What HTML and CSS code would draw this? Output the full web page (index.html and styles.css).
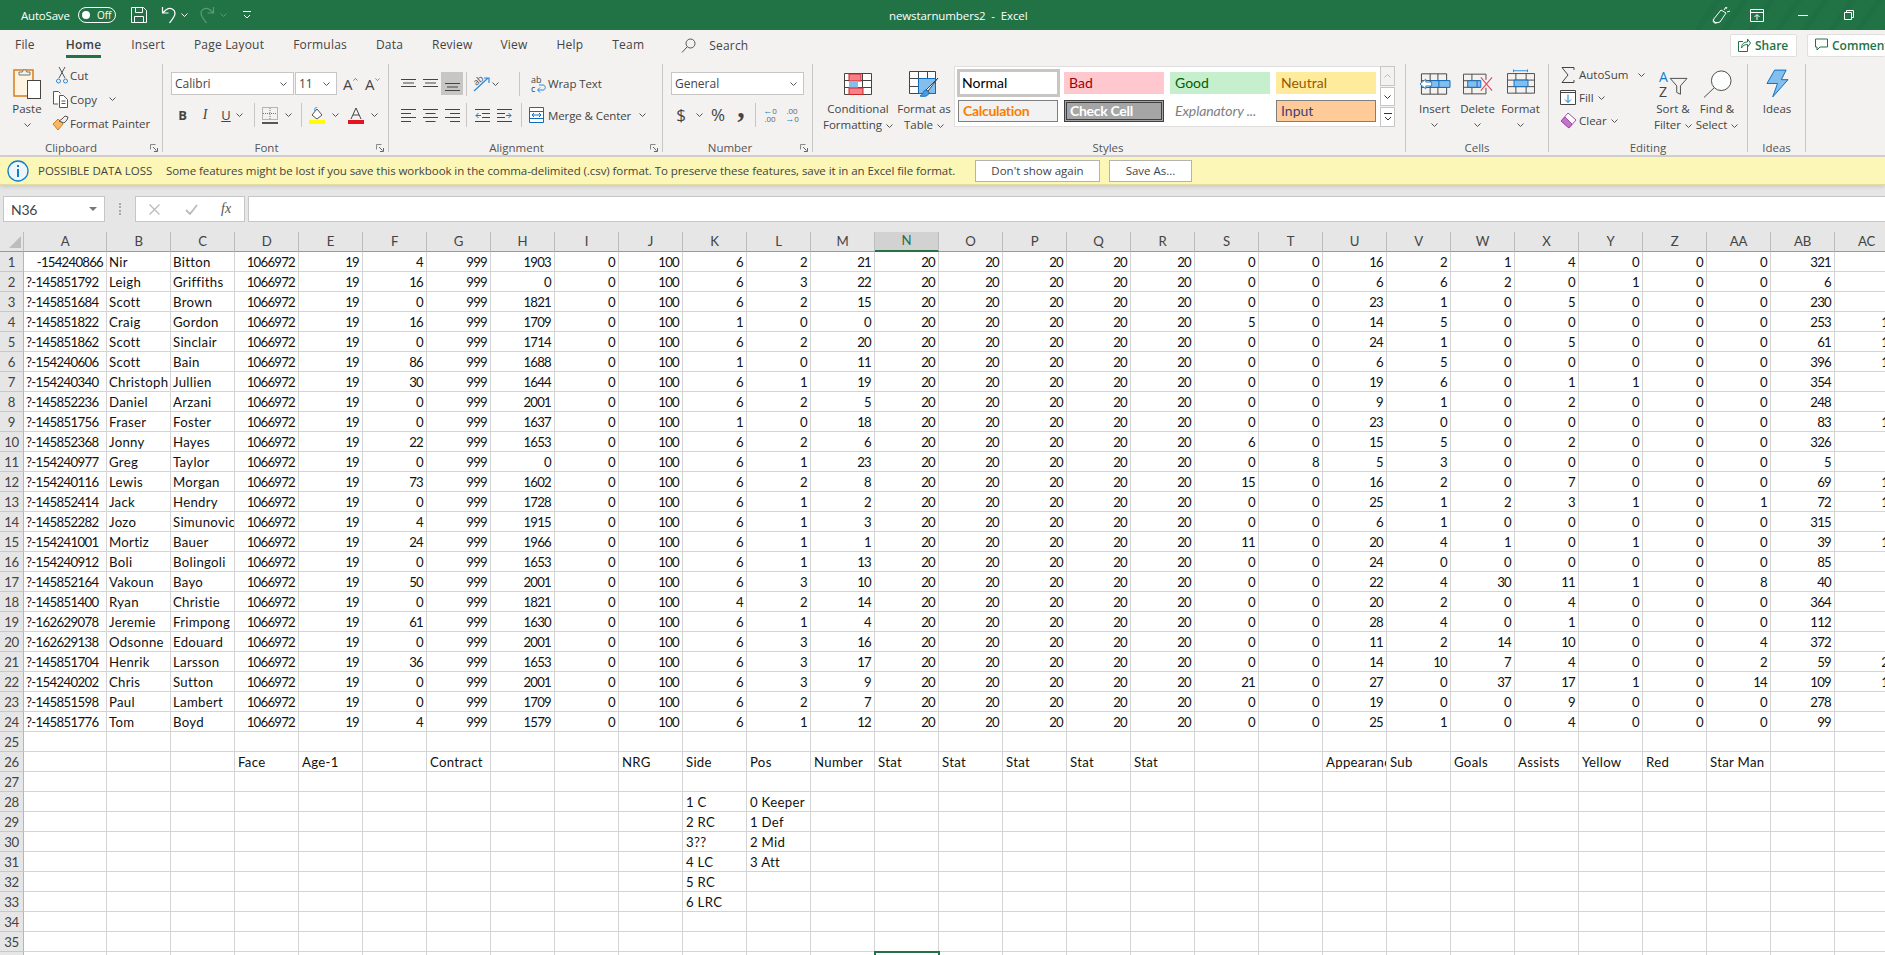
FILE: index.html
```html
<!DOCTYPE html>
<html lang="en">
<head>
<meta charset="utf-8">
<title>newstarnumbers2 - Excel</title>
<link rel="stylesheet" href="styles.css">
</head>
<body>
<svg class="defs" aria-hidden="true">
<symbol id="chev" viewBox="0 0 7 4"><path d="M.5.5l3 3 3-3" fill="none" stroke="currentColor"/></symbol>
<symbol id="save" viewBox="0 0 16 16"><path d="M.5.5h12l3 3v12H.5zM4.5.5v5h7v-5M3.5 15.5v-6h9v6" fill="none" stroke="currentColor"/></symbol>
<symbol id="undo" viewBox="0 0 15 18"><path d="M1.5 1v6h6M1.5 7l4-3.5c4-2.5 8.500 0 8.500 4 0 3.500-3 5.500-5.500 9.500" fill="none" stroke="currentColor" stroke-width="1.200"/></symbol>
<symbol id="redo" viewBox="0 0 15 18"><path d="M13.500 1v6h-6M13.500 7l-4-3.500c-4-2.500-8.500 0-8.500 4 0 3.500 3 5.500 5.500 9.500" fill="none" stroke="currentColor" stroke-width="1.200"/></symbol>
<symbol id="custom" viewBox="0 0 8 8"><path d="M0 .5h8M1 4l3 3 3-3" fill="none" stroke="currentColor"/></symbol>
<symbol id="feedback" viewBox="0 0 18 18"><path d="M1 14L9 4l5 3-6 9-4 1zM2 13.500a2 2 0 1 0 3 2.500M12 4l2-3M15 6l3-1M14 3l1-2" fill="none" stroke="currentColor"/></symbol>
<symbol id="display" viewBox="0 0 14 13"><path d="M.5.500h13v12H.5zM.5 3.500h13M7 11V6M4.500 8L7 5.500 9.500 8" fill="none" stroke="currentColor"/></symbol>
<symbol id="restore" viewBox="0 0 10 10"><path d="M.5 2.500h7v7h-7zM2.500 2.500v-2h7v7h-2" fill="none" stroke="currentColor"/></symbol>
<symbol id="search" viewBox="0 0 15 15"><circle cx="9.500" cy="5.500" r="4.500" fill="none" stroke="#555"/><path d="M6 9l-5 5.500" stroke="#555" fill="none"/></symbol>
<symbol id="share" viewBox="0 0 13 14"><path d="M5 3.500H.5v10h9V9M3.500 10c0-4 2.500-6 6-6V1l3 4-3 4V6.500c-3 0-4.500 1-6 3.500z" fill="none" stroke="#217346"/></symbol>
<symbol id="comment" viewBox="0 0 13 13"><path d="M.5.500h12v8H5l-3 3v-3H.5z" fill="none" stroke="#217346"/></symbol>
<symbol id="paste" viewBox="0 0 28 32"><path d="M1 6h19v26H1z" fill="#fff4e0" stroke="#d67f1c" stroke-width="1.500" transform="translate(0 -4)"/><path d="M6 4h3.500c0-3 4-3 4 0H17v3H6z" fill="#f3f2f1" stroke="#777"/><rect x="14.500" y="12.500" width="13" height="18" fill="#fff" stroke="#444"/></symbol>
<symbol id="cut" viewBox="0 0 12 17"><path d="M3 0l6 11M9 0L3 11" fill="none" stroke="#555"/><circle cx="2.500" cy="14" r="2" fill="none" stroke="#2b88d8"/><circle cx="9.500" cy="14" r="2" fill="none" stroke="#2b88d8"/></symbol>
<symbol id="copy" viewBox="0 0 15 17"><path d="M5 13H.5V.5h5l2 2M6.500 4.500h4l4 4v8h-8z" fill="#fff" stroke="#555"/><path d="M8.500 10h4M8.500 12.500h4" stroke="#555"/></symbol>
<symbol id="painter" viewBox="0 0 17 16"><path d="M1 9l5-5 5 5-5 6z" fill="#f5b76b" stroke="#d67f1c"/><path d="M7 6l3-2 3-3 3 1-1 3-3 3z" fill="#eee" stroke="#555"/></symbol>
<symbol id="launcher" viewBox="0 0 8 8"><path d="M.5 5.500v-5h5" fill="none" stroke="#888"/><path d="M3 3l3.500 3.500M7.500 4v3.500H4" fill="none" stroke="#666"/></symbol>
<symbol id="borders" viewBox="0 0 16 17"><path d="M.5.500h15v12H.5z" fill="none" stroke="#777" stroke-dasharray="1 1"/><path d="M8 1v12M1 6.500h14" stroke="#777" stroke-dasharray="1 1"/><path d="M0 16h16" stroke="#222" stroke-width="1.500"/></symbol>
<symbol id="fill" viewBox="0 0 16 17"><path d="M3 8l5-6 5 6-5 4z" fill="#fff" stroke="#555"/><path d="M8 1C8 0 5 0 6 4" fill="none" stroke="#2b88d8"/><rect y="13" width="16" height="4" fill="#ff0"/></symbol>
<symbol id="color" viewBox="0 0 16 17"><path d="M3 12L8 1l5 11M5 8h6" fill="none" stroke="#444"/><rect y="13" width="16" height="4" fill="#e81123"/></symbol>
<symbol id="a-top" viewBox="0 0 15 9"><path d="M0 .5h15M2 4h11M0 7.500h15" stroke="#444" fill="none"/></symbol>
<symbol id="a-left" viewBox="0 0 15 15"><path d="M0 1.500h15M0 5.500h10M0 9.500h15M0 13.500h10" stroke="#444"/></symbol>
<symbol id="a-center" viewBox="0 0 15 15"><path d="M0 1.500h15M2.500 5.500h10M0 9.500h15M2.500 13.500h10" stroke="#444"/></symbol>
<symbol id="a-right" viewBox="0 0 15 15"><path d="M0 1.500h15M5 5.500h10M0 9.500h15M5 13.500h10" stroke="#444"/></symbol>
<symbol id="indent-l" viewBox="0 0 15 15"><path d="M0 1.500h15M7 5.500h8M7 9.500h8M0 13.500h15" stroke="#444"/><path d="M6 7.500H1M3.500 5L1 7.500 3.500 10" fill="none" stroke="#0f7fc9"/></symbol>
<symbol id="indent-r" viewBox="0 0 15 15"><path d="M0 1.500h15M0 5.500h8M0 9.500h8M0 13.500h15" stroke="#444"/><path d="M9 7.500h5M11.500 5L14 7.500 11.500 10" fill="none" stroke="#0f7fc9"/></symbol>
<symbol id="orient" viewBox="0 0 18 17"><path d="M1 16L15 3M11 3h5v5" fill="none" stroke="#2b88d8" stroke-width="1.200"/><text x="1" y="9" font-size="9" font-family="Open Sans" fill="#555" transform="rotate(-40 5 7)">ab</text></symbol>
<symbol id="wrap" viewBox="0 0 16 18"><text x="1" y="8" font-size="9" font-family="Open Sans" fill="#444">ab</text><text x="1" y="17" font-size="9" font-family="Open Sans" fill="#444">c</text><path d="M8 15h5c3 0 3-5 0-5H9M10 12.500L7.500 15l2.500 2.500" fill="none" stroke="#2b88d8"/></symbol>
<symbol id="merge" viewBox="0 0 15 16"><path d="M.5.500h14v15H.5zM.5 4.500h14M.5 11.500h14" fill="#fff" stroke="#0f6cbd"/><path d="M3 8h9M5 6L3 8l2 2M10 6l2 2-2 2" fill="none" stroke="#0f6cbd"/></symbol>
<symbol id="cf" viewBox="0 0 28 22"><path d="M.5.500h27v21H.5zM9.500.5v21M18.500.5v21M.5 7.500h27M.5 14.500h27" fill="#fff" stroke="#444"/><rect x="5" y="1" width="12" height="7" fill="#f6808a" stroke="#c62828"/><rect x="5" y="8" width="9" height="7" fill="#83beec"/><rect x="5" y="15" width="14" height="6.500" fill="#f6808a" stroke="#c62828"/></symbol>
<symbol id="fat" viewBox="0 0 30 26"><path d="M.5.500h26v22H.5zM9.500.5v22M18.500.5v22M.5 7.500h26M.5 15.500h26" fill="#fff" stroke="#444"/><rect x="10" y="8" width="16" height="14" fill="#83beec"/><path d="M9.500 7.500h17v15h-17z" fill="none" stroke="#0f6cbd"/><path d="M29 7L19 20l-2-1z" fill="#fff" stroke="#444"/><path d="M17 19c-3 0-2 4-6 6 5 1 9 0 9-4z" fill="#4a9ee0" stroke="#0f6cbd"/></symbol>
<symbol id="insert" viewBox="0 0 33 22"><path d="M2.500.5h26v21h-26zM11.500.5v21M19.500.5v21M2.500 7.500h26M2.500 14.500h26" fill="none" stroke="#444"/><path d="M12 7.500h20v7H12z" fill="#83beec" stroke="#0f6cbd"/><path d="M20.500 7.500v7" stroke="#0f6cbd"/><path d="M1 11l6-5v3h6v4H7v3z" fill="#fff" stroke="#2b88d8"/></symbol>
<symbol id="delete" viewBox="0 0 32 22"><path d="M.5.500h24M.5 21.500h24M.5.500v21M9.500.5v21M24.500.5v6M24.500 15v6.500M.5 7.500h18M.5 14.500h18" fill="none" stroke="#444"/><path d="M5 7.500h14v7H5z" fill="#83beec" stroke="#0f6cbd"/><path d="M15 7.500v7" stroke="#0f6cbd"/><path d="M19 4l12 14M31 4L19 18" stroke="#e8475b" stroke-width="1.200"/></symbol>
<symbol id="format" viewBox="0 0 30 26"><path d="M7 1.500h15M7 0v3M22 0v3" stroke="#2b88d8" fill="none"/><path d="M.5 4.500h29v21H.5zM9.500 4.500v21M20.500 4.500v21M.5 11.500h29M.5 18.500h29" fill="none" stroke="#444"/><path d="M7.500 11.500h15v7h-15z" fill="#83beec" stroke="#0f6cbd"/></symbol>
<symbol id="sigma" viewBox="0 0 14 16"><path d="M13 3V.5H1l6 7.500-6 7.500h12V13" fill="none" stroke="#444"/></symbol>
<symbol id="filldown" viewBox="0 0 16 15"><path d="M.5.500h15v14H.5zM.5 2.500h15" fill="#fff" stroke="#444"/><path d="M8 4.500v8M5 9.500l3 3 3-3" fill="none" stroke="#0f7fc9"/></symbol>
<symbol id="clear" viewBox="0 0 17 17"><path d="M1 9l7-8 8 7-7 8z" fill="#fff" stroke="#a84aae"/><path d="M1 9l4-4 7 7-3 4z" fill="#c076c6" stroke="#a84aae"/></symbol>
<symbol id="sort" viewBox="0 0 32 30"><text x="1" y="13" font-size="15" font-family="Open Sans" fill="#0f7fc9">A</text><text x="1" y="29" font-size="15" font-family="Open Sans" fill="#444">Z</text><path d="M13 9h18l-7 8v9l-4-2v-7z" fill="none" stroke="#444"/></symbol>
<symbol id="find" viewBox="0 0 31 30"><circle cx="19.500" cy="11.500" r="10.500" fill="#fff" stroke="#444"/><path d="M12 19L1 29.500" stroke="#444" fill="none"/></symbol>
<symbol id="ideas" viewBox="0 0 24 30"><path d="M9 1h12l-5 10h7L7 29l5-14H1z" fill="#83beec" stroke="#0f6cbd"/></symbol>
<symbol id="info" viewBox="0 0 22 22"><circle cx="11" cy="11" r="10" fill="#eef6fb" stroke="#0f7fc9" stroke-width="1.300"/><rect x="10" y="9" width="2" height="8" fill="#0f7fc9"/><rect x="10" y="5" width="2" height="2" fill="#0f7fc9"/></symbol>
<symbol id="cross" viewBox="0 0 11 11"><path d="M.5.500l10 10M10.500.5l-10 10" stroke="#bbb" fill="none" stroke-width="1.300"/></symbol>
<symbol id="tick" viewBox="0 0 13 11"><path d="M1 6l4 4 7-9" stroke="#bbb" fill="none" stroke-width="1.800"/></symbol>
<symbol id="caret" viewBox="0 0 8 4"><path d="M0 0h8L4 4z" fill="#777"/></symbol>
<symbol id="up" viewBox="0 0 7 4"><path d="M.5 3.500l3-3 3 3" fill="none" stroke="currentColor"/></symbol>
<symbol id="more" viewBox="0 0 8 8"><path d="M0 .5h8M1 4l3 3 3-3" fill="none" stroke="#333"/></symbol>
<symbol id="corner" viewBox="0 0 12 12"><path d="M12 0v12H0z" fill="#bdbdbd"/></symbol>
</svg>

<header class="titlebar">
  <span class="autosave">AutoSave</span>
  <span class="toggle"><span class="knob"></span><span class="toggle-text">Off</span></span>
  <svg class="i-save"><use href="#save"/></svg>
  <svg class="i-undo"><use href="#undo"/></svg>
  <svg class="i-chev-t"><use href="#chev"/></svg>
  <svg class="i-redo"><use href="#redo"/></svg>
  <svg class="i-chev-d"><use href="#chev"/></svg>
  <svg class="i-custom"><use href="#custom"/></svg>
  <span class="doc-title">newstarnumbers2 &nbsp;-&nbsp; Excel</span>
  <svg class="i-feedback"><use href="#feedback"/></svg>
  <svg class="i-display"><use href="#display"/></svg>
  <span class="i-min"></span>
  <svg class="i-restore"><use href="#restore"/></svg>
</header>

<section class="ribbon">
  <nav class="tabs">
    <span class="tab tab-file">File</span>
    <span class="tab tab-active">Home</span>
    <span class="tab">Insert</span>
    <span class="tab">Page Layout</span>
    <span class="tab">Formulas</span>
    <span class="tab">Data</span>
    <span class="tab tab-review">Review</span>
    <span class="tab">View</span>
    <span class="tab">Help</span>
    <span class="tab">Team</span>
    <svg class="i-search"><use href="#search"/></svg>
    <span class="search-text">Search</span>
    <span class="pill pill-share"><svg class="i13"><use href="#share"/></svg>Share</span>
    <span class="pill pill-comment"><svg class="i13"><use href="#comment"/></svg>Comments</span>
  </nav>
  <div class="groups">
    <section class="group g-clip">
      <div class="body">
        <div class="big big-paste"><span class="icon"><svg class="s-paste"><use href="#paste"/></svg></span><span>Paste</span><svg class="chev"><use href="#chev"/></svg></div>
        <div class="stack">
          <div class="line"><span class="lead"><svg class="s-cut"><use href="#cut"/></svg></span>Cut</div>
          <div class="line"><span class="lead"><svg class="s-copy"><use href="#copy"/></svg></span>Copy<svg class="chev chev-copy"><use href="#chev"/></svg></div>
          <div class="line"><span class="lead"><svg class="s-painter"><use href="#painter"/></svg></span>Format Painter</div>
        </div>
      </div>
      <div class="label pad20">Clipboard<svg class="launcher"><use href="#launcher"/></svg></div>
    </section>

    <section class="group g-font">
      <div class="body col">
        <div class="row row1">
          <span class="combo combo-font"><span class="combo-text">Calibri</span><svg class="chev"><use href="#chev"/></svg></span>
          <span class="combo combo-size"><span class="combo-text">11</span><svg class="chev"><use href="#chev"/></svg></span>
          <span class="grow-a">A<svg class="mini"><use href="#up"/></svg></span>
          <span class="shrink-a">A<svg class="mini mini-d"><use href="#chev"/></svg></span>
        </div>
        <div class="row row2 font-row2">
          <b class="fmt fmt-b">B</b>
          <i class="fmt fmt-i">I</i>
          <u class="fmt fmt-u">U</u>
          <svg class="chev"><use href="#chev"/></svg>
          <span class="sep sep-a"></span>
          <span class="slot"><svg class="s16"><use href="#borders"/></svg></span>
          <svg class="chev"><use href="#chev"/></svg>
          <span class="sep sep-b"></span>
          <span class="slot"><svg class="s16"><use href="#fill"/></svg></span>
          <svg class="chev"><use href="#chev"/></svg>
          <span class="slot slot-color"><svg class="s16"><use href="#color"/></svg></span>
          <svg class="chev"><use href="#chev"/></svg>
        </div>
      </div>
      <div class="label pad18">Font<svg class="launcher"><use href="#launcher"/></svg></div>
    </section>

    <section class="group g-align">
      <div class="body col">
        <div class="row row1">
          <span class="al"><svg class="s-al-t"><use href="#a-top"/></svg></span>
          <span class="al"><svg class="s-al-t"><use href="#a-top"/></svg></span>
          <span class="al al-on al-bottom"><svg class="s-al-t"><use href="#a-top"/></svg></span>
          <span class="sep sep-c"></span>
          <span class="slot-o"><svg class="s-orient"><use href="#orient"/></svg></span>
          <svg class="chev"><use href="#chev"/></svg>
          <span class="sep sep-d"></span>
          <svg class="s-wrap"><use href="#wrap"/></svg>
          <span class="rtext">Wrap Text</span>
        </div>
        <div class="row row2">
          <span class="al"><svg class="s15"><use href="#a-left"/></svg></span>
          <span class="al"><svg class="s15"><use href="#a-center"/></svg></span>
          <span class="al"><svg class="s15"><use href="#a-right"/></svg></span>
          <span class="sep sep-c"></span>
          <span class="al al-i1"><svg class="s15"><use href="#indent-l"/></svg></span>
          <span class="al"><svg class="s15"><use href="#indent-r"/></svg></span>
          <span class="sep sep-e"></span>
          <svg class="s-merge"><use href="#merge"/></svg>
          <span class="rtext rtext-m">Merge &amp; Center</span>
          <svg class="chev chev-m"><use href="#chev"/></svg>
        </div>
      </div>
      <div class="label pad18">Alignment<svg class="launcher"><use href="#launcher"/></svg></div>
    </section>

    <section class="group g-num">
      <div class="body col">
        <div class="row row1"><span class="combo combo-num"><span class="combo-text">General</span><svg class="chev"><use href="#chev"/></svg></span></div>
        <div class="row row2">
          <span class="num-sym num-d">$</span>
          <svg class="chev"><use href="#chev"/></svg>
          <span class="num-sym num-p">%</span>
          <span class="num-sym num-c">,</span>
          <span class="sep sep-f"></span>
          <span class="dec dec-1"><span class="dec-b">←</span>0<br>.00</span>
          <span class="dec dec-2">.00<br><span class="dec-b">→</span>0</span>
        </div>
      </div>
      <div class="label pad15">Number<svg class="launcher"><use href="#launcher"/></svg></div>
    </section>

    <section class="group g-styles">
      <div class="body">
        <div class="big big-cf"><span class="icon"><svg class="s-cf"><use href="#cf"/></svg></span><span>Conditional</span><span>Formatting<svg class="chev chev-in"><use href="#chev"/></svg></span></div>
        <div class="big big-fat"><span class="icon"><svg class="s-fat"><use href="#fat"/></svg></span><span>Format as</span><span>Table<svg class="chev chev-in"><use href="#chev"/></svg></span></div>
        <div class="gallery">
          <span class="st st-normal">Normal</span>
          <span class="st st-bad">Bad</span>
          <span class="st st-good">Good</span>
          <span class="st st-neutral">Neutral</span>
          <span class="st st-calc">Calculation</span>
          <span class="st st-check">Check Cell</span>
          <span class="st st-expl">Explanatory ...</span>
          <span class="st st-input">Input</span>
        </div>
        <div class="gal-scroll">
          <span class="gs gs-up"><svg class="chev gs-faint"><use href="#up"/></svg></span>
          <span class="gs"><svg class="chev gs-dark"><use href="#chev"/></svg></span>
          <span class="gs gs-more"><svg class="s-more"><use href="#more"/></svg></span>
        </div>
      </div>
      <div class="label pad2">Styles</div>
    </section>

    <section class="group g-cells">
      <div class="body">
        <div class="big big-c"><span class="icon"><svg class="s-ins"><use href="#insert"/></svg></span><span>Insert</span><svg class="chev"><use href="#chev"/></svg></div>
        <div class="big big-c"><span class="icon"><svg class="s-del"><use href="#delete"/></svg></span><span>Delete</span><svg class="chev"><use href="#chev"/></svg></div>
        <div class="big big-c"><span class="icon"><svg class="s-fmt"><use href="#format"/></svg></span><span>Format</span><svg class="chev"><use href="#chev"/></svg></div>
      </div>
      <div class="label">Cells</div>
    </section>

    <section class="group g-edit">
      <div class="body">
        <div class="stack stack-e">
          <div class="line-e"><span class="lead-e"><svg class="s-sigma"><use href="#sigma"/></svg></span>AutoSum<svg class="chev chev-as"><use href="#chev"/></svg></div>
          <div class="line-e"><span class="lead-e"><svg class="s-filld"><use href="#filldown"/></svg></span>Fill<svg class="chev chev-in"><use href="#chev"/></svg></div>
          <div class="line-e"><span class="lead-e"><svg class="s-clear"><use href="#clear"/></svg></span>Clear<svg class="chev chev-in"><use href="#chev"/></svg></div>
        </div>
        <div class="big big-sort"><span class="icon"><svg class="s-sort"><use href="#sort"/></svg></span><span>Sort &amp;</span><span>Filter<svg class="chev chev-in"><use href="#chev"/></svg></span></div>
        <div class="big big-find"><span class="icon"><svg class="s-find"><use href="#find"/></svg></span><span>Find &amp;</span><span>Select<svg class="chev chev-in"><use href="#chev"/></svg></span></div>
      </div>
      <div class="label">Editing</div>
    </section>

    <section class="group g-ideas">
      <div class="body">
        <div class="big big-ideas"><span class="icon"><svg class="s-ideas"><use href="#ideas"/></svg></span><span>Ideas</span></div>
      </div>
      <div class="label">Ideas</div>
    </section>
  </div>
</section>

<section class="msgbar">
  <svg class="s-info"><use href="#info"/></svg>
  <strong class="msg-title">POSSIBLE DATA LOSS</strong>
  <span class="msg-text">Some features might be lost if you save this workbook in the comma-delimited (.csv) format. To preserve these features, save it in an Excel file format.</span>
  <span class="msg-btn msg-btn-a">Don't show again</span>
  <span class="msg-btn msg-btn-b">Save As...</span>
</section>

<section class="fxbar">
  <div class="namebox"><span>N36</span><svg class="s-caret"><use href="#caret"/></svg></div>
  <span class="grip"></span>
  <div class="fxbtns"><svg class="s-cross"><use href="#cross"/></svg><svg class="s-tick"><use href="#tick"/></svg><i class="fx">fx</i></div>
  <div class="fxinput"></div>
</section>

<main class="sheet">
<table class="grid">
<colgroup><col class="c-head"><col class="c-a"><col span="28" class="c-n"></colgroup>
<thead><tr><th class="corner"><svg class="s-corner"><use href="#corner"/></svg></th><th>A</th><th>B</th><th>C</th><th>D</th><th>E</th><th>F</th><th>G</th><th>H</th><th>I</th><th>J</th><th>K</th><th>L</th><th>M</th><th class="cur">N</th><th>O</th><th>P</th><th>Q</th><th>R</th><th>S</th><th>T</th><th>U</th><th>V</th><th>W</th><th>X</th><th>Y</th><th>Z</th><th>AA</th><th>AB</th><th>AC</th></tr></thead>
<tbody>
<tr><th>1</th><td>-154240866</td><td class="l">Nir</td><td class="l">Bitton</td><td>1066972</td><td>19</td><td>4</td><td>999</td><td>1903</td><td>0</td><td>100</td><td>6</td><td>2</td><td>21</td><td>20</td><td>20</td><td>20</td><td>20</td><td>20</td><td>0</td><td>0</td><td>16</td><td>2</td><td>1</td><td>4</td><td>0</td><td>0</td><td>0</td><td>321</td><td>5</td></tr>
<tr><th>2</th><td class="id">?-145851792</td><td class="l">Leigh</td><td class="l">Griffiths</td><td>1066972</td><td>19</td><td>16</td><td>999</td><td>0</td><td>0</td><td>100</td><td>6</td><td>3</td><td>22</td><td>20</td><td>20</td><td>20</td><td>20</td><td>20</td><td>0</td><td>0</td><td>6</td><td>6</td><td>2</td><td>0</td><td>1</td><td>0</td><td>0</td><td>6</td><td>5</td></tr>
<tr><th>3</th><td class="id">?-145851684</td><td class="l">Scott</td><td class="l">Brown</td><td>1066972</td><td>19</td><td>0</td><td>999</td><td>1821</td><td>0</td><td>100</td><td>6</td><td>2</td><td>15</td><td>20</td><td>20</td><td>20</td><td>20</td><td>20</td><td>0</td><td>0</td><td>23</td><td>1</td><td>0</td><td>5</td><td>0</td><td>0</td><td>0</td><td>230</td><td>5</td></tr>
<tr><th>4</th><td class="id">?-145851822</td><td class="l">Craig</td><td class="l">Gordon</td><td>1066972</td><td>19</td><td>16</td><td>999</td><td>1709</td><td>0</td><td>100</td><td>1</td><td>0</td><td>0</td><td>20</td><td>20</td><td>20</td><td>20</td><td>20</td><td>5</td><td>0</td><td>14</td><td>5</td><td>0</td><td>0</td><td>0</td><td>0</td><td>0</td><td>253</td><td>10</td></tr>
<tr><th>5</th><td class="id">?-145851862</td><td class="l">Scott</td><td class="l">Sinclair</td><td>1066972</td><td>19</td><td>0</td><td>999</td><td>1714</td><td>0</td><td>100</td><td>6</td><td>2</td><td>20</td><td>20</td><td>20</td><td>20</td><td>20</td><td>20</td><td>0</td><td>0</td><td>24</td><td>1</td><td>0</td><td>5</td><td>0</td><td>0</td><td>0</td><td>61</td><td>10</td></tr>
<tr><th>6</th><td class="id">?-154240606</td><td class="l">Scott</td><td class="l">Bain</td><td>1066972</td><td>19</td><td>86</td><td>999</td><td>1688</td><td>0</td><td>100</td><td>1</td><td>0</td><td>11</td><td>20</td><td>20</td><td>20</td><td>20</td><td>20</td><td>0</td><td>0</td><td>6</td><td>5</td><td>0</td><td>0</td><td>0</td><td>0</td><td>0</td><td>396</td><td>10</td></tr>
<tr><th>7</th><td class="id">?-154240340</td><td class="l">Christoph</td><td class="l">Jullien</td><td>1066972</td><td>19</td><td>30</td><td>999</td><td>1644</td><td>0</td><td>100</td><td>6</td><td>1</td><td>19</td><td>20</td><td>20</td><td>20</td><td>20</td><td>20</td><td>0</td><td>0</td><td>19</td><td>6</td><td>0</td><td>1</td><td>1</td><td>0</td><td>0</td><td>354</td><td>5</td></tr>
<tr><th>8</th><td class="id">?-145852236</td><td class="l">Daniel</td><td class="l">Arzani</td><td>1066972</td><td>19</td><td>0</td><td>999</td><td>2001</td><td>0</td><td>100</td><td>6</td><td>2</td><td>5</td><td>20</td><td>20</td><td>20</td><td>20</td><td>20</td><td>0</td><td>0</td><td>9</td><td>1</td><td>0</td><td>2</td><td>0</td><td>0</td><td>0</td><td>248</td><td>5</td></tr>
<tr><th>9</th><td class="id">?-145851756</td><td class="l">Fraser</td><td class="l">Foster</td><td>1066972</td><td>19</td><td>0</td><td>999</td><td>1637</td><td>0</td><td>100</td><td>1</td><td>0</td><td>18</td><td>20</td><td>20</td><td>20</td><td>20</td><td>20</td><td>0</td><td>0</td><td>23</td><td>0</td><td>0</td><td>0</td><td>0</td><td>0</td><td>0</td><td>83</td><td>10</td></tr>
<tr><th>10</th><td class="id">?-145852368</td><td class="l">Jonny</td><td class="l">Hayes</td><td>1066972</td><td>19</td><td>22</td><td>999</td><td>1653</td><td>0</td><td>100</td><td>6</td><td>2</td><td>6</td><td>20</td><td>20</td><td>20</td><td>20</td><td>20</td><td>6</td><td>0</td><td>15</td><td>5</td><td>0</td><td>2</td><td>0</td><td>0</td><td>0</td><td>326</td><td>5</td></tr>
<tr><th>11</th><td class="id">?-154240977</td><td class="l">Greg</td><td class="l">Taylor</td><td>1066972</td><td>19</td><td>0</td><td>999</td><td>0</td><td>0</td><td>100</td><td>6</td><td>1</td><td>23</td><td>20</td><td>20</td><td>20</td><td>20</td><td>20</td><td>0</td><td>8</td><td>5</td><td>3</td><td>0</td><td>0</td><td>0</td><td>0</td><td>0</td><td>5</td><td>5</td></tr>
<tr><th>12</th><td class="id">?-154240116</td><td class="l">Lewis</td><td class="l">Morgan</td><td>1066972</td><td>19</td><td>73</td><td>999</td><td>1602</td><td>0</td><td>100</td><td>6</td><td>2</td><td>8</td><td>20</td><td>20</td><td>20</td><td>20</td><td>20</td><td>15</td><td>0</td><td>16</td><td>2</td><td>0</td><td>7</td><td>0</td><td>0</td><td>0</td><td>69</td><td>10</td></tr>
<tr><th>13</th><td class="id">?-145852414</td><td class="l">Jack</td><td class="l">Hendry</td><td>1066972</td><td>19</td><td>0</td><td>999</td><td>1728</td><td>0</td><td>100</td><td>6</td><td>1</td><td>2</td><td>20</td><td>20</td><td>20</td><td>20</td><td>20</td><td>0</td><td>0</td><td>25</td><td>1</td><td>2</td><td>3</td><td>1</td><td>0</td><td>1</td><td>72</td><td>10</td></tr>
<tr><th>14</th><td class="id">?-145852282</td><td class="l">Jozo</td><td class="l">Simunovic</td><td>1066972</td><td>19</td><td>4</td><td>999</td><td>1915</td><td>0</td><td>100</td><td>6</td><td>1</td><td>3</td><td>20</td><td>20</td><td>20</td><td>20</td><td>20</td><td>0</td><td>0</td><td>6</td><td>1</td><td>0</td><td>0</td><td>0</td><td>0</td><td>0</td><td>315</td><td>5</td></tr>
<tr><th>15</th><td class="id">?-154241001</td><td class="l">Mortiz</td><td class="l">Bauer</td><td>1066972</td><td>19</td><td>24</td><td>999</td><td>1966</td><td>0</td><td>100</td><td>6</td><td>1</td><td>1</td><td>20</td><td>20</td><td>20</td><td>20</td><td>20</td><td>11</td><td>0</td><td>20</td><td>4</td><td>1</td><td>0</td><td>1</td><td>0</td><td>0</td><td>39</td><td>10</td></tr>
<tr><th>16</th><td class="id">?-154240912</td><td class="l">Boli</td><td class="l">Bolingoli</td><td>1066972</td><td>19</td><td>0</td><td>999</td><td>1653</td><td>0</td><td>100</td><td>6</td><td>1</td><td>13</td><td>20</td><td>20</td><td>20</td><td>20</td><td>20</td><td>0</td><td>0</td><td>24</td><td>0</td><td>0</td><td>0</td><td>0</td><td>0</td><td>0</td><td>85</td><td>5</td></tr>
<tr><th>17</th><td class="id">?-145852164</td><td class="l">Vakoun</td><td class="l">Bayo</td><td>1066972</td><td>19</td><td>50</td><td>999</td><td>2001</td><td>0</td><td>100</td><td>6</td><td>3</td><td>10</td><td>20</td><td>20</td><td>20</td><td>20</td><td>20</td><td>0</td><td>0</td><td>22</td><td>4</td><td>30</td><td>11</td><td>1</td><td>0</td><td>8</td><td>40</td><td>5</td></tr>
<tr><th>18</th><td class="id">?-145851400</td><td class="l">Ryan</td><td class="l">Christie</td><td>1066972</td><td>19</td><td>0</td><td>999</td><td>1821</td><td>0</td><td>100</td><td>4</td><td>2</td><td>14</td><td>20</td><td>20</td><td>20</td><td>20</td><td>20</td><td>0</td><td>0</td><td>20</td><td>2</td><td>0</td><td>4</td><td>0</td><td>0</td><td>0</td><td>364</td><td>5</td></tr>
<tr><th>19</th><td class="id">?-162629078</td><td class="l">Jeremie</td><td class="l">Frimpong</td><td>1066972</td><td>19</td><td>61</td><td>999</td><td>1630</td><td>0</td><td>100</td><td>6</td><td>1</td><td>4</td><td>20</td><td>20</td><td>20</td><td>20</td><td>20</td><td>0</td><td>0</td><td>28</td><td>4</td><td>0</td><td>1</td><td>0</td><td>0</td><td>0</td><td>112</td><td>5</td></tr>
<tr><th>20</th><td class="id">?-162629138</td><td class="l">Odsonne</td><td class="l">Edouard</td><td>1066972</td><td>19</td><td>0</td><td>999</td><td>2001</td><td>0</td><td>100</td><td>6</td><td>3</td><td>16</td><td>20</td><td>20</td><td>20</td><td>20</td><td>20</td><td>0</td><td>0</td><td>11</td><td>2</td><td>14</td><td>10</td><td>0</td><td>0</td><td>4</td><td>372</td><td>5</td></tr>
<tr><th>21</th><td class="id">?-145851704</td><td class="l">Henrik</td><td class="l">Larsson</td><td>1066972</td><td>19</td><td>36</td><td>999</td><td>1653</td><td>0</td><td>100</td><td>6</td><td>3</td><td>17</td><td>20</td><td>20</td><td>20</td><td>20</td><td>20</td><td>0</td><td>0</td><td>14</td><td>10</td><td>7</td><td>4</td><td>0</td><td>0</td><td>2</td><td>59</td><td>20</td></tr>
<tr><th>22</th><td class="id">?-154240202</td><td class="l">Chris</td><td class="l">Sutton</td><td>1066972</td><td>19</td><td>0</td><td>999</td><td>2001</td><td>0</td><td>100</td><td>6</td><td>3</td><td>9</td><td>20</td><td>20</td><td>20</td><td>20</td><td>20</td><td>21</td><td>0</td><td>27</td><td>0</td><td>37</td><td>17</td><td>1</td><td>0</td><td>14</td><td>109</td><td>10</td></tr>
<tr><th>23</th><td class="id">?-145851598</td><td class="l">Paul</td><td class="l">Lambert</td><td>1066972</td><td>19</td><td>0</td><td>999</td><td>1709</td><td>0</td><td>100</td><td>6</td><td>2</td><td>7</td><td>20</td><td>20</td><td>20</td><td>20</td><td>20</td><td>0</td><td>0</td><td>19</td><td>0</td><td>0</td><td>9</td><td>0</td><td>0</td><td>0</td><td>278</td><td>5</td></tr>
<tr><th>24</th><td class="id">?-145851776</td><td class="l">Tom</td><td class="l">Boyd</td><td>1066972</td><td>19</td><td>4</td><td>999</td><td>1579</td><td>0</td><td>100</td><td>6</td><td>1</td><td>12</td><td>20</td><td>20</td><td>20</td><td>20</td><td>20</td><td>0</td><td>0</td><td>25</td><td>1</td><td>0</td><td>4</td><td>0</td><td>0</td><td>0</td><td>99</td><td>5</td></tr>
<tr><th>25</th><td></td><td></td><td></td><td></td><td></td><td></td><td></td><td></td><td></td><td></td><td></td><td></td><td></td><td></td><td></td><td></td><td></td><td></td><td></td><td></td><td></td><td></td><td></td><td></td><td></td><td></td><td></td><td></td><td></td></tr>
<tr class="txt"><th>26</th><td></td><td></td><td></td><td>Face</td><td>Age-1</td><td></td><td>Contract</td><td></td><td></td><td>NRG</td><td>Side</td><td>Pos</td><td>Number</td><td>Stat</td><td>Stat</td><td>Stat</td><td>Stat</td><td>Stat</td><td></td><td></td><td>Appearances</td><td>Sub</td><td>Goals</td><td>Assists</td><td>Yellow</td><td>Red</td><td>Star Man</td><td></td><td></td></tr>
<tr><th>27</th><td></td><td></td><td></td><td></td><td></td><td></td><td></td><td></td><td></td><td></td><td></td><td></td><td></td><td></td><td></td><td></td><td></td><td></td><td></td><td></td><td></td><td></td><td></td><td></td><td></td><td></td><td></td><td></td><td></td></tr>
<tr class="txt"><th>28</th><td></td><td></td><td></td><td></td><td></td><td></td><td></td><td></td><td></td><td></td><td>1 C</td><td>0 Keeper</td><td></td><td></td><td></td><td></td><td></td><td></td><td></td><td></td><td></td><td></td><td></td><td></td><td></td><td></td><td></td><td></td><td></td></tr>
<tr class="txt"><th>29</th><td></td><td></td><td></td><td></td><td></td><td></td><td></td><td></td><td></td><td></td><td>2 RC</td><td>1 Def</td><td></td><td></td><td></td><td></td><td></td><td></td><td></td><td></td><td></td><td></td><td></td><td></td><td></td><td></td><td></td><td></td><td></td></tr>
<tr class="txt"><th>30</th><td></td><td></td><td></td><td></td><td></td><td></td><td></td><td></td><td></td><td></td><td>3??</td><td>2 Mid</td><td></td><td></td><td></td><td></td><td></td><td></td><td></td><td></td><td></td><td></td><td></td><td></td><td></td><td></td><td></td><td></td><td></td></tr>
<tr class="txt"><th>31</th><td></td><td></td><td></td><td></td><td></td><td></td><td></td><td></td><td></td><td></td><td>4 LC</td><td>3 Att</td><td></td><td></td><td></td><td></td><td></td><td></td><td></td><td></td><td></td><td></td><td></td><td></td><td></td><td></td><td></td><td></td><td></td></tr>
<tr class="txt"><th>32</th><td></td><td></td><td></td><td></td><td></td><td></td><td></td><td></td><td></td><td></td><td>5 RC</td><td></td><td></td><td></td><td></td><td></td><td></td><td></td><td></td><td></td><td></td><td></td><td></td><td></td><td></td><td></td><td></td><td></td><td></td></tr>
<tr class="txt"><th>33</th><td></td><td></td><td></td><td></td><td></td><td></td><td></td><td></td><td></td><td></td><td>6 LRC</td><td></td><td></td><td></td><td></td><td></td><td></td><td></td><td></td><td></td><td></td><td></td><td></td><td></td><td></td><td></td><td></td><td></td><td></td></tr>
<tr><th>34</th><td></td><td></td><td></td><td></td><td></td><td></td><td></td><td></td><td></td><td></td><td></td><td></td><td></td><td></td><td></td><td></td><td></td><td></td><td></td><td></td><td></td><td></td><td></td><td></td><td></td><td></td><td></td><td></td><td></td></tr>
<tr><th>35</th><td></td><td></td><td></td><td></td><td></td><td></td><td></td><td></td><td></td><td></td><td></td><td></td><td></td><td></td><td></td><td></td><td></td><td></td><td></td><td></td><td></td><td></td><td></td><td></td><td></td><td></td><td></td><td></td><td></td></tr>
<tr><th>36</th><td></td><td></td><td></td><td></td><td></td><td></td><td></td><td></td><td></td><td></td><td></td><td></td><td></td><td class="active"></td><td></td><td></td><td></td><td></td><td></td><td></td><td></td><td></td><td></td><td></td><td></td><td></td><td></td><td></td><td></td></tr>
</tbody>
</table>
</main>
</body>
</html>
```
FILE: styles.css
```css
* { box-sizing: border-box; }
html, body { margin: 0; height: 100%; overflow: hidden; }
body { width: 1885px; height: 955px; background: #e6e6e6; font: 11.500px "Open Sans", sans-serif; color: #444; }
svg { display: block; flex: none; }
.defs { position: absolute; width: 0; height: 0; }

/* title bar */
.titlebar { display: flex; align-items: center; height: 30px; background-color: #217346; background-image: repeating-linear-gradient(125deg, transparent 0 16px, rgba(0,0,0,.035) 16px 22px); background-size: 190px 30px; background-position: right top; background-repeat: no-repeat; color: #fff; padding-left: 21px; }
.titlebar > * { flex: none; }
.autosave { width: 57px; font-size: 11.500px; letter-spacing: -.2px; }
.toggle { display: flex; align-items: center; width: 38px; height: 16px; border: 1px solid #fff; border-radius: 8px; padding-left: 3px; }
.knob { width: 8px; height: 8px; border-radius: 50%; background: #fff; }
.toggle-text { font-size: 10px; margin-left: 7px; }
.i-save { width: 16px; height: 16px; margin-left: 15px; }
.i-undo { width: 15px; height: 18px; margin-left: 14px; }
.i-chev-t { width: 7px; height: 4px; margin-left: 5px; }
.i-redo { width: 15px; height: 18px; margin-left: 12px; color: #5a9a78; }
.i-chev-d { width: 7px; height: 4px; margin-left: 5px; color: #5a9a78; }
.i-custom { width: 8px; height: 8px; margin-left: 16px; }
.doc-title { margin-left: 638px; width: 137px; white-space: nowrap; font-size: 11.500px; letter-spacing: -.1px; }
.i-feedback { width: 18px; height: 18px; margin-left: 686px; }
.i-display { width: 14px; height: 13px; margin-left: 20px; }
.i-min { width: 10px; height: 1px; background: #fff; margin-left: 34px; }
.i-restore { width: 10px; height: 10px; margin-left: 36px; }

/* ribbon */
.ribbon { height: 127px; background: #f3f2f1; border-bottom: 2px solid #d2d0ce; }
.tabs { display: flex; align-items: center; height: 30px; padding-left: 15px; white-space: nowrap; font-size: 12px; letter-spacing: .2px; }
.tabs > * { flex: none; }
.tab { position: relative; margin-right: 29px; line-height: 30px; }
.tab-active { font-weight: 600; color: #404040; margin-right: 30px; }
.tab-active::after { content: ""; position: absolute; left: 0; right: 0; bottom: 2px; height: 3px; background: #217346; }
.tab-file { margin-right: 31px; }
.tab-review { margin-right: 28px; }
.i-search { width: 15px; height: 15px; margin-left: 8px; }
.search-text { margin-left: 13px; }
.pill { display: flex; align-items: center; gap: 4px; height: 23px; background: #fff; border: 1px solid #e1dfdd; border-radius: 2px; color: #217346; font-weight: 600; font-size: 12px; padding-left: 7px; letter-spacing: 0; }
.pill-share { width: 67px; margin-left: auto; }
.pill-comment { margin-left: 10px; width: 78px; overflow: hidden; border-right: 0; }
.i13 { width: 13px; height: 14px; }

.groups { display: flex; height: 92px; padding-top: 4px; }
.group { position: relative; display: flex; flex-direction: column; flex: none; height: 88px; border-right: 1px solid #c8c6c4; }
.body { display: flex; height: 72px; flex: none; }
.body.col { flex-direction: column; }
.label { position: relative; line-height: 16px; text-align: center; margin-top: auto; margin-bottom: -4px; color: #555; height: 16px; white-space: nowrap; }
.pad20 { padding-right: 20px; }
.pad18 { padding-right: 18px; }
.pad15 { padding-right: 15px; }
.pad2 { padding-right: 2px; }
.launcher { position: absolute; right: 4px; bottom: 4px; width: 8px; height: 8px; }
.g-clip { width: 163px; }
.g-font { width: 226px; }
.g-align { width: 274px; }
.g-num { width: 150px; }
.g-styles { width: 593px; }
.g-cells { width: 143px; }
.g-edit { width: 199px; }
.g-ideas { width: 58px; }

.big { display: flex; flex-direction: column; align-items: center; line-height: 16px; flex: none; white-space: nowrap; padding-top: 2px; }
.big .icon { display: flex; align-items: center; justify-content: center; height: 35px; }
.big > .chev { margin-top: 6px; }
.chev { width: 7px; height: 4px; color: #555; }
.chev-in { display: inline-block; margin-left: 4px; vertical-align: middle; }
.big-paste { width: 42px; margin-left: 6px; }
.s-paste { width: 28px; height: 32px; }
.stack { margin-left: 3px; margin-top: -1px; }
.line { display: flex; align-items: center; height: 24px; white-space: nowrap; }
.lead { display: flex; justify-content: center; width: 19px; }
.s-cut { width: 12px; height: 17px; margin-left: 2px; }
.s-copy { width: 15px; height: 17px; }
.s-painter { width: 17px; height: 16px; }
.chev-copy { margin-left: 12px; }

.row { display: flex; align-items: center; flex: none; }
.row1 { height: 23px; margin-top: 8px; padding-left: 8px; }
.row2 { height: 24px; margin-top: 8px; padding-left: 8px; }
.combo { display: flex; align-items: center; justify-content: space-between; height: 23px; background: #fff; border: 1px solid #c8c6c4; padding: 0 6px 0 3px; }
.combo-font { width: 123px; }
.combo-size { width: 42px; margin-left: 1px; }
.combo-num { width: 133px; }
.combo-text { font-size: 12px; }
.grow-a, .shrink-a { display: flex; align-items: flex-start; font-size: 15px; line-height: 16px; }
.grow-a { margin-left: 6px; width: 22px; }
.shrink-a { width: 14px; }
.mini { width: 5px; height: 3px; margin-top: 2px; color: #555; }
.mini-d { color: #0f7fc9; }
.fmt { display: block; text-align: center; font-family: "Liberation Serif", serif; font-size: 14px; color: #444; }
.fmt-b { width: 23px; font-family: "Open Sans", sans-serif; font-size: 13px; }
.fmt-i { width: 22px; }
.fmt-u { width: 20px; font-family: "Open Sans", sans-serif; font-size: 13px; }
.sep { width: 1px; height: 24px; background: #c8c6c4; flex: none; }
.sep-a { margin-left: 11px; }
.sep-b { margin-left: 9px; }
.slot { display: flex; justify-content: center; width: 30px; }
.slot-color { margin-left: 2px; }
.s16 { width: 16px; height: 17px; }
.al { display: flex; align-items: center; justify-content: center; width: 22px; height: 23px; flex: none; }
.al-on { background: #c8c6c4; }
.al-bottom { align-items: flex-end; padding-bottom: 3px; }
.s-al-t { width: 15px; height: 9px; }
.s15 { width: 15px; height: 15px; }
.sep-c { margin-left: 3px; }
.sep-d { margin-left: 20px; }
.sep-e { margin-left: 6px; }
.slot-o { width: 19px; margin-left: 6px; }
.s-orient { width: 18px; height: 17px; }
.s-wrap { width: 16px; height: 18px; margin-left: 10px; }
.rtext { margin-left: 2px; white-space: nowrap; letter-spacing: -.1px; }
.rtext-m { margin-left: 4px; }
.al-i1 { margin-left: 4px; }
.s-merge { width: 15px; height: 16px; margin-left: 7px; }
.chev-m { margin-left: 8px; }
.num-sym { display: block; text-align: center; font-size: 17px; color: #444; line-height: 20px; }
.num-d { width: 20px; margin-right: 5px; }
.num-p { width: 22px; margin-left: 4px; }
.num-c { width: 22px; margin-left: 1px; font-weight: 700; font-family: "Liberation Serif", serif; font-size: 30px; margin-top: -16px; }
.sep-f { margin-left: 3px; }
.dec { font-size: 8px; line-height: 8px; width: 18px; text-align: center; color: #666; }
.dec-b { color: #0f7fc9; font-size: 9px; }
.dec-1 { margin-left: 5px; }
.dec-2 { margin-left: 4px; }

.big-cf { width: 76px; margin-left: 7px; }
.big-fat { width: 56px; }
.s-cf { width: 28px; height: 22px; }
.s-fat { width: 30px; height: 26px; }
.gallery { display: grid; grid-template-columns: repeat(4, 100px); grid-template-rows: 22px 22px; gap: 6px; flex: none; width: 426px; height: 61px; margin: 2px 0 0 2px; padding: 5px 0 0 3px; background: #fff; border: 1px solid #e1dfdd; border-right: 0; font: 14px Lato, sans-serif; }
.st { display: flex; align-items: center; padding-left: 5px; padding-bottom: 2px; white-space: nowrap; overflow: hidden; }
.st-normal { color: #000; outline: 3px solid #c8c6c4; margin: 0 1px 0 2px; padding-left: 2px; }
.st-bad { background: #ffc7ce; color: #9c0006; }
.st-good { background: #c6efce; color: #006100; }
.st-neutral { background: #ffeb9c; color: #9c5700; }
.st-calc { background: #f2f2f2; color: #fa7d00; font-weight: 700; border: 1px solid #7f7f7f; padding-left: 4px; letter-spacing: -.3px; }
.st-check { background: #a5a5a5; color: #fff; font-weight: 700; border: 3px double #3f3f3f; padding-left: 3px; letter-spacing: -.3px; }
.st-expl { color: #7f7f7f; font-style: italic; letter-spacing: -.1px; }
.st-input { background: #fc9; color: #3f3f76; border: 1px solid #7f7f7f; padding-left: 4px; }
.gal-scroll { display: flex; flex-direction: column; gap: 1px; margin-top: 2px; width: 15px; height: 61px; flex: none; }
.gs { display: flex; align-items: center; justify-content: center; height: 20px; border: 1px solid #c8c6c4; background: #fff; }
.gs-up { background: #f3f2f1; }
.gs-faint { color: #bbb; }
.gs-dark { color: #333; }
.s-more { width: 8px; height: 8px; }

.g-cells .body { padding-left: 7px; }
.big-c { width: 43px; }
.s-ins { width: 32px; height: 22px; }
.s-del { width: 30px; height: 22px; }
.s-fmt { width: 28px; height: 25px; margin-top: -4px; }
.stack-e { width: 91px; margin-left: 11px; margin-top: -1px; }
.line-e { display: flex; align-items: center; height: 23px; white-space: nowrap; }
.lead-e { width: 19px; }
.s-sigma { width: 14px; height: 16px; margin-left: 1px; }
.s-filld { width: 16px; height: 15px; }
.s-clear { width: 17px; height: 17px; }
.chev-as { margin-left: 10px; }
.big-sort { width: 44px; }
.big-find { width: 44px; }
.s-sort { width: 30px; height: 28px; }
.s-find { width: 29px; height: 28px; }
.big-ideas { width: 58px; }
.s-ideas { width: 23px; height: 29px; }

/* message bar */
.msgbar { display: flex; align-items: center; height: 28px; background: #fcf7b6; border-bottom: 1px solid #e2dd9e; box-shadow: 0 2px 4px rgba(0,0,0,.12); padding-left: 7px; position: relative; white-space: nowrap; font-size: 11.500px; color: #444; }
.s-info { width: 22px; height: 22px; }
.msg-title { margin-left: 9px; font-weight: 400; width: 128px; flex: none; }
.msg-text { width: 809px; flex: none; letter-spacing: -.07px; }
.msg-btn { display: flex; align-items: center; justify-content: center; height: 22px; background: #fff; border: 1px solid #b5b3b1; flex: none; }
.msg-btn-a { width: 125px; }
.msg-btn-b { width: 83px; margin-left: 9px; }

/* formula bar */
.fxbar { display: flex; height: 47px; padding: 11px 0 0 3px; background: #e6e6e6; }
.fxbar > * { flex: none; }
.namebox { display: flex; align-items: center; justify-content: space-between; width: 102px; height: 26px; background: #fff; border: 1px solid #c6c6c6; padding: 0 7px; font: 14px Lato, sans-serif; letter-spacing: -.3px; color: #444; }
.s-caret { width: 8px; height: 4px; }
.grip { width: 2px; height: 12px; margin: 7px 14px 0 14px; border-left: 2px dotted #aaa; }
.fxbtns { display: flex; align-items: center; width: 110px; height: 26px; padding-left: 13px; background: #fff; border: 1px solid #c6c6c6; }
.s-cross { width: 11px; height: 11px; }
.s-tick { width: 13px; height: 11px; margin-left: 25px; }
.fx { margin-left: 23px; font: italic 14px "Liberation Serif", serif; color: #555; }
.fxinput { width: 1637px; height: 26px; margin-left: 3px; background: #fff; border: 1px solid #c6c6c6; border-right: 0; }

/* sheet */
.sheet { height: 723px; overflow: hidden; background: #fff; }
.grid { border-collapse: separate; border-spacing: 0; table-layout: fixed; width: 1899px; font: 13.200px/1 Lato, sans-serif; color: #111; letter-spacing: -.75px; }
.c-head { width: 24px; }
.c-a { width: 83px; }
.c-n { width: 64px; }
.grid tr { height: 20px; }
.grid th { height: 20px; padding: 2px 0 0; font-weight: 400; color: #444; background: #e6e6e6; text-align: center; border-right: 1px solid #b5b5b5; border-bottom: 1px solid #c8c8c8; overflow: hidden; letter-spacing: -.3px; }
.grid thead th { padding: 0; border-right: 1px solid #bcbcbc; border-bottom: 1px solid #999; }
.grid th.corner { position: relative; }
.s-corner { position: absolute; right: 2px; bottom: 3px; width: 12px; height: 12px; }
.grid th.cur { background: #d2d2d2; color: #217346; border-bottom: 2px solid #217346; }
.grid td { height: 20px; padding: 2px 3px 0 2px; border-right: 1px solid #d4d4d4; border-bottom: 1px solid #d4d4d4; text-align: right; white-space: nowrap; overflow: hidden; }
.grid td.id { text-align: left; letter-spacing: -.65px; }
.grid td.l, .txt td { text-align: left; letter-spacing: .3px; }
.grid .txt td { padding-left: 3px; padding-right: 0; }
.grid td.active { outline: 2px solid #217346; outline-offset: -1px; overflow: visible; }
```
